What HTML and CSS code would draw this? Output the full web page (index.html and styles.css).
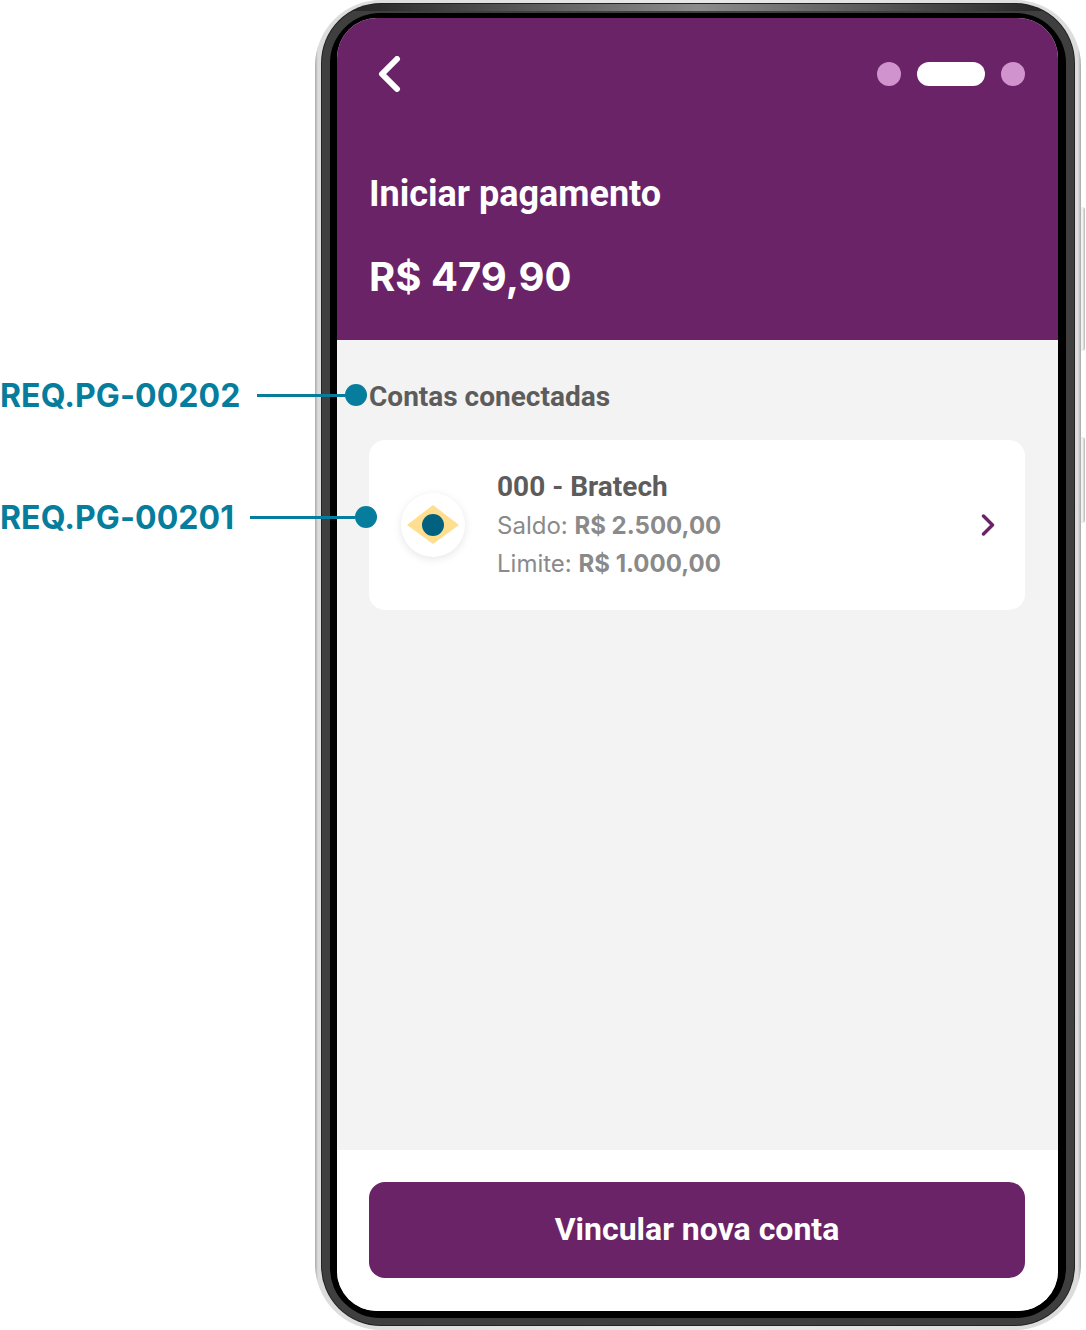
FILE: index.html
```html
<!DOCTYPE html>
<html lang="pt-BR">
<head>
    <meta charset="UTF-8">
    <meta name="viewport" content="width=device-width, initial-scale=1.0">
    <title>Iniciar pagamento</title>
    <link rel="stylesheet" href="styles.css">
</head>
<body>
    <div class="annotation annotation-title">
        <span class="annotation-label">REQ.PG-00202</span>
        <span class="annotation-line"></span>
        <span class="annotation-dot"></span>
    </div>
    <div class="annotation annotation-card">
        <span class="annotation-label">REQ.PG-00201</span>
        <span class="annotation-line"></span>
        <span class="annotation-dot"></span>
    </div>

    <div class="phone">
        <span class="side-button side-button-top"></span>
        <span class="side-button side-button-bottom"></span>
        <div class="phone-bezel">
            <div class="phone-inner">
                <div class="screen">
                    <header class="screen-header">
                        <div class="top-bar">
                            <svg class="back-icon" width="24" height="36" viewBox="0 0 24 36" fill="none">
                                <path d="M20 3 L5 18 L20 33" stroke="#fff" stroke-width="6" stroke-linecap="round" stroke-linejoin="round"/>
                            </svg>
                            <div class="steps">
                                <span class="step-dot"></span>
                                <span class="step-current"></span>
                                <span class="step-dot"></span>
                            </div>
                        </div>
                        <h1 class="screen-title">Iniciar pagamento</h1>
                        <p class="screen-amount">R$ 479,90</p>
                    </header>

                    <main class="screen-content">
                        <h2 class="section-title">Contas conectadas</h2>
                        <div class="account-card">
                            <div class="bank-logo">
                                <svg width="52" height="40" viewBox="0 0 52 40">
                                    <polygon points="0,20 26,0 52,20 26,39" fill="#FFDE8F"/>
                                    <circle cx="26" cy="20" r="11" fill="#02617F"/>
                                </svg>
                            </div>
                            <div class="account-info">
                                <div class="account-name">000 - Bratech</div>
                                <div class="account-line">Saldo: <b>R$ 2.500,00</b></div>
                                <div class="account-line">Limite: <b>R$ 1.000,00</b></div>
                            </div>
                            <svg class="account-arrow" width="14" height="22" viewBox="0 0 14 22" fill="none">
                                <path d="M2.5 2 L11.5 11 L2.5 20" stroke="#6A2367" stroke-width="3.4" stroke-linecap="round" stroke-linejoin="round"/>
                            </svg>
                        </div>
                    </main>

                    <footer class="screen-footer">
                        <button class="primary-button">Vincular nova conta</button>
                    </footer>
                </div>
            </div>
        </div>
    </div>
</body>
</html>
```

FILE: styles.css
```css
* {
    margin: 0;
    padding: 0;
    box-sizing: border-box;
}

body {
    width: 1086px;
    height: 1330px;
    background: white;
    font-family: 'Roboto', sans-serif;
    padding-left: 315px;
    overflow: hidden;
}

/* Anotações */
.annotation {
    position: absolute;
    left: 0;
    display: flex;
    align-items: center;
    z-index: 2;
}

.annotation-title {
    top: 375px;
}

.annotation-card {
    top: 497px;
}

.annotation-label {
    font-family: 'Inter', sans-serif;
    font-size: 32px;
    line-height: 40px;
    font-weight: 700;
    letter-spacing: 0.1px;
    color: #067D9C;
    position: relative;
    top: 1px;
}

.annotation-line {
    height: 3px;
    background: #067D9C;
}

.annotation-title .annotation-line {
    margin-left: 16px;
    width: 88px;
}

.annotation-card .annotation-line {
    margin-left: 16px;
    width: 105px;
}

.annotation-dot {
    width: 22px;
    height: 22px;
    border-radius: 50%;
    background: #067D9C;
}

/* Moldura do telefone */
.phone {
    position: relative;
    width: 766px;
    height: 1330px;
    padding: 3px 6px 4px 6px;
    border-radius: 66px;
    background: linear-gradient(90deg, #a8a8a8 0, #dcdcdc 3px, #e8e8e8 50%, #dcdcdc calc(100% - 3px), #a8a8a8 100%);
}

.side-button {
    position: absolute;
    right: -4px;
    width: 4px;
    background: linear-gradient(90deg, #f2f2f2 0, #f2f2f2 40%, #b5b5b5 100%);
    border-radius: 0 3px 3px 0;
}

.side-button-top {
    top: 207px;
    height: 144px;
}

.side-button-bottom {
    top: 437px;
    height: 86px;
}

.phone-bezel {
    height: 100%;
    padding: 10px 9px 8px 9px;
    border-radius: 60px;
    background: linear-gradient(90deg, #1c1c1c 0, #8c8c8c 50%, #1c1c1c 100%) top / 100% 8px no-repeat, #3f3f3f;
    box-shadow: inset 0 0 0 1px #232323;
}

.phone-inner {
    height: 100%;
    padding: 5px 8px 7px 7px;
    border-radius: 50px;
    background: #000;
}

.screen {
    height: 100%;
    display: flex;
    flex-direction: column;
    border-radius: 40px;
    overflow: hidden;
    background: #F3F3F3;
}

.screen-header {
    height: 322px;
    padding: 39px 33px 0 32px;
    background: #6A2367;
    color: white;
}

.top-bar {
    display: flex;
    align-items: center;
    justify-content: space-between;
    height: 34px;
}

.back-icon {
    margin-left: 8px;
}

.steps {
    display: flex;
    gap: 16px;
}

.step-dot {
    width: 24px;
    height: 24px;
    border-radius: 50%;
    background: #D093CE;
}

.step-current {
    width: 68px;
    height: 24px;
    border-radius: 12px;
    background: white;
}

.screen-title {
    margin-top: 79px;
    font-size: 36px;
    line-height: 48px;
    font-weight: 700;
}

.screen-amount {
    margin-top: 35px;
    font-family: 'Inter', sans-serif;
    font-size: 40px;
    line-height: 48px;
    font-weight: 700;
}

.screen-content {
    flex: 1;
    padding: 38px 33px 0 32px;
}

.section-title {
    font-size: 28px;
    line-height: 38px;
    font-weight: 700;
    color: #5C5C5C;
}

.account-card {
    display: flex;
    align-items: center;
    height: 170px;
    margin-top: 24px;
    padding: 0 30px 0 32px;
    border-radius: 16px;
    background: white;
}

.bank-logo {
    display: flex;
    align-items: center;
    justify-content: center;
    width: 64px;
    height: 64px;
    border-radius: 50%;
    background: white;
    box-shadow: 0 2px 8px rgba(0, 0, 0, 0.1);
}

.account-info {
    flex: 1;
    margin-left: 32px;
}

.account-name {
    font-size: 28px;
    line-height: 38px;
    font-weight: 700;
    color: #5C5C5C;
}

.account-line {
    font-family: 'Inter', sans-serif;
    font-size: 24px;
    line-height: 38px;
    color: #8A8A8A;
    position: relative;
    top: 1px;
}

.account-line b {
    font-weight: 700;
}

.screen-footer {
    height: 161px;
    padding: 32px 33px 0 32px;
    background: white;
}

.primary-button {
    width: 100%;
    height: 96px;
    padding-bottom: 3px;
    border: none;
    border-radius: 16px;
    background: #6A2367;
    color: white;
    font-family: 'Roboto', sans-serif;
    font-size: 32px;
    font-weight: 700;
}
```
